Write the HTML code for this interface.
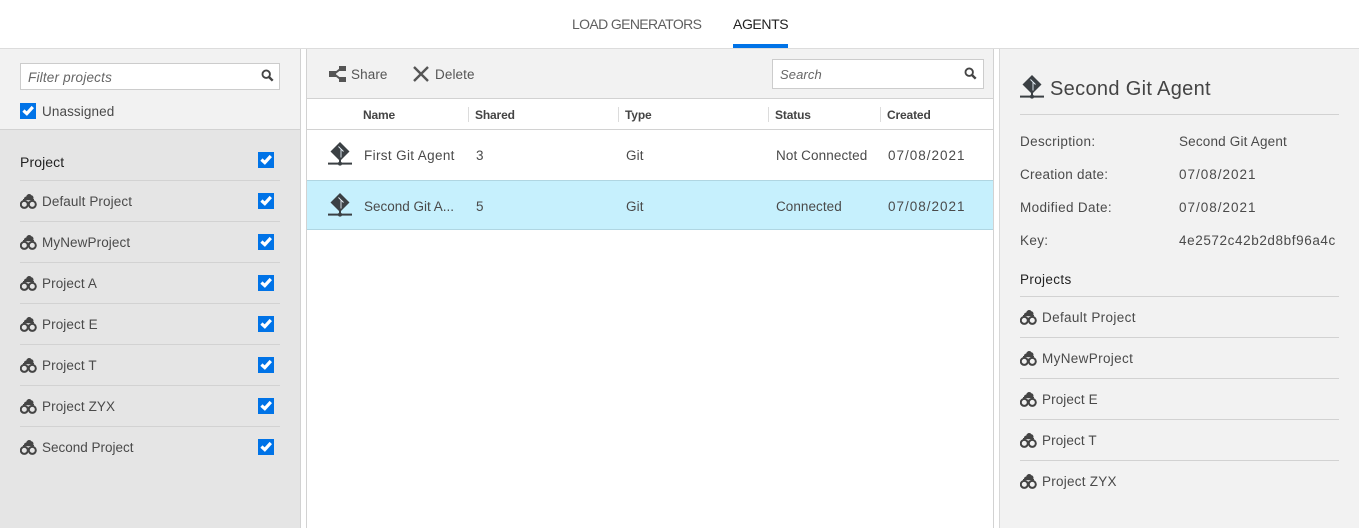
<!DOCTYPE html>
<html><head><meta charset="utf-8">
<style>
html,body{margin:0;padding:0;background:#fff}
body{width:1359px;height:528px;overflow:hidden;position:relative;font-family:"Liberation Sans",sans-serif;font-size:14px;color:#4a4a4a}
.a{position:absolute}
.t{position:absolute;white-space:nowrap;line-height:18px;font-size:13.5px;letter-spacing:.1px}
.r{letter-spacing:.35px}
.n{letter-spacing:1px}
.l{position:absolute;height:1px;background:#d2d2d2}
.b{font-weight:bold;font-size:12px;color:#444;letter-spacing:-.15px}
.d{color:#222}
.s{position:absolute;width:1px;height:15px;top:107px;background:#dcdcdc}
svg{position:absolute;overflow:visible}
</style></head><body>
<svg width="0" height="0" style="position:absolute">
<defs>
<symbol id="p" viewBox="0 0 17 16"><path d="M4 6.4C3.8 4.8 4.8 3.6 6.2 3.6 6.8 1 10 -.1 11.4 2.2 13.2 2.4 14.2 4.6 13 6.4z" fill="#444"/><rect x="3" y="6" width="11" height="1.2" fill="#444"/><circle cx="4.3" cy="11.4" r="3.5" fill="none" stroke="#444" stroke-width="2"/><circle cx="12.3" cy="11.4" r="3.5" fill="none" stroke="#444" stroke-width="2"/><rect x="7" y="8.6" width="3" height="2" fill="#444"/></symbol>
<symbol id="g" viewBox="0 0 24 24"><path d="M12 0 21.5 9.5 12 19 2.5 9.5z" fill="#3b4044"/><path d="M10.5 4.5 13 7v8.5M13 7l2.5 2.5" fill="none" stroke="#e8f2fa" stroke-width=".9"/><rect x="11" y="18" width="2" height="4" fill="#3b4044"/><rect x="0" y="20.6" width="24" height="2" fill="#3b4044"/><circle cx="12" cy="21.6" r="2" fill="#3b4044"/></symbol>
<symbol id="c" viewBox="0 0 16 16"><rect width="16" height="16" fill="#0073e7"/><path d="M3.4 7.6 6.8 10.6 12.8 4" fill="none" stroke="#fff" stroke-width="3.2"/></symbol>
<symbol id="m" viewBox="0 0 14 14"><circle cx="5.6" cy="5.6" r="4" fill="none" stroke="#444" stroke-width="2"/><path d="M8.6 8.6 12.6 12.6" stroke="#444" stroke-width="2.6"/></symbol>
</defs></svg>

<!-- top tabs -->
<div class="t" style="left:572px;top:15px;font-size:14px;color:#5f5f5f;letter-spacing:-.63px">LOAD GENERATORS</div>
<div class="t" style="left:733px;top:15px;font-size:14px;color:#222;letter-spacing:-.4px">AGENTS</div>
<div class="a" style="left:733px;top:44px;width:55px;height:4px;background:#0073e7"></div>
<div class="l" style="left:0;top:48px;width:1359px;background:#dcdcdc"></div>

<!-- left panel -->
<div class="a" style="left:0;top:49px;width:300px;height:80px;background:#f2f2f2"></div>
<div class="a" style="left:0;top:130px;width:300px;height:398px;background:#e5e5e5"></div>
<div class="l" style="left:0;top:129px;width:300px"></div>
<div class="a" style="left:300px;top:49px;width:1px;height:479px;background:#d2d2d2"></div>
<div class="a" style="left:20px;top:63px;width:258px;height:25px;background:#fff;border:1px solid #ccc"></div>
<div class="t" style="left:28px;top:69px;font-style:italic;color:#666;letter-spacing:.2px">Filter projects</div>
<svg style="left:261px;top:69px" width="13" height="13"><use href="#m"/></svg>
<svg style="left:20px;top:103px" width="16" height="16"><use href="#c"/></svg>
<div class="t" style="left:42px;top:103px">Unassigned</div>
<div class="t d" style="left:20px;top:153px;font-size:14px">Project</div>
<svg style="left:258px;top:152px" width="16" height="16"><use href="#c"/></svg>
<div class="l" style="left:20px;top:180px;width:260px"></div>
<div class="l" style="left:20px;top:221px;width:260px"></div>
<div class="l" style="left:20px;top:262px;width:260px"></div>
<div class="l" style="left:20px;top:303px;width:260px"></div>
<div class="l" style="left:20px;top:344px;width:260px"></div>
<div class="l" style="left:20px;top:385px;width:260px"></div>
<div class="l" style="left:20px;top:426px;width:260px"></div>

<svg style="left:20px;top:193px" width="17" height="16"><use href="#p"/></svg><div class="t" style="left:42px;top:193px">Default Project</div><svg style="left:258px;top:193px" width="16" height="16"><use href="#c"/></svg>
<svg style="left:20px;top:234px" width="17" height="16"><use href="#p"/></svg><div class="t" style="left:42px;top:234px">MyNewProject</div><svg style="left:258px;top:234px" width="16" height="16"><use href="#c"/></svg>
<svg style="left:20px;top:275px" width="17" height="16"><use href="#p"/></svg><div class="t" style="left:42px;top:275px">Project A</div><svg style="left:258px;top:275px" width="16" height="16"><use href="#c"/></svg>
<svg style="left:20px;top:316px" width="17" height="16"><use href="#p"/></svg><div class="t" style="left:42px;top:316px">Project E</div><svg style="left:258px;top:316px" width="16" height="16"><use href="#c"/></svg>
<svg style="left:20px;top:357px" width="17" height="16"><use href="#p"/></svg><div class="t" style="left:42px;top:357px">Project T</div><svg style="left:258px;top:357px" width="16" height="16"><use href="#c"/></svg>
<svg style="left:20px;top:398px" width="17" height="16"><use href="#p"/></svg><div class="t" style="left:42px;top:398px">Project ZYX</div><svg style="left:258px;top:398px" width="16" height="16"><use href="#c"/></svg>
<svg style="left:20px;top:439px" width="17" height="16"><use href="#p"/></svg><div class="t" style="left:42px;top:439px;letter-spacing:0">Second Project</div><svg style="left:258px;top:439px" width="16" height="16"><use href="#c"/></svg>

<!-- center panel -->
<div class="a" style="left:306px;top:49px;width:1px;height:479px;background:#d2d2d2"></div>
<div class="a" style="left:993px;top:49px;width:1px;height:479px;background:#d2d2d2"></div>
<div class="a" style="left:307px;top:49px;width:686px;height:49px;background:#f2f2f2"></div>
<div class="l" style="left:307px;top:98px;width:686px"></div>
<svg style="left:329px;top:66px" width="17" height="16" viewBox="0 0 17 16"><rect x="0" y="5" width="7" height="6" fill="#555"/><rect x="10" y="0" width="7" height="5" fill="#555"/><rect x="10" y="11" width="7" height="5" fill="#555"/><path d="M5 8 12 2.5M5 8 12 13.5" stroke="#555" stroke-width="2" fill="none"/></svg>
<div class="t" style="left:351px;top:66px;color:#555">Share</div>
<svg style="left:413px;top:66px" width="16" height="16" viewBox="0 0 16 16"><path d="M1 1 15 15M15 1 1 15" stroke="#555" stroke-width="2.4" fill="none"/></svg>
<div class="t" style="left:435px;top:66px;color:#555">Delete</div>
<div class="a" style="left:772px;top:59px;width:210px;height:28px;background:#fff;border:1px solid #ccc"></div>
<div class="t" style="left:780px;top:66px;font-style:italic;font-size:13px;color:#666">Search</div>
<svg style="left:964px;top:67px" width="13" height="13"><use href="#m"/></svg>

<div class="t b" style="left:363px;top:106px">Name</div>
<div class="t b" style="left:475px;top:106px">Shared</div>
<div class="t b" style="left:625px;top:106px">Type</div>
<div class="t b" style="left:775px;top:106px">Status</div>
<div class="t b" style="left:887px;top:106px">Created</div>
<div class="s" style="left:468px"></div><div class="s" style="left:618px"></div><div class="s" style="left:768px"></div><div class="s" style="left:880px"></div>
<div class="l" style="left:307px;top:129px;width:686px"></div>

<svg style="left:328px;top:142px" width="24" height="24"><use href="#g"/></svg>
<div class="t r" style="left:364px;top:147px">First Git Agent</div>
<div class="t" style="left:476px;top:147px">3</div>
<div class="t" style="left:626px;top:147px">Git</div>
<div class="t" style="left:776px;top:147px">Not Connected</div>
<div class="t n" style="left:888px;top:147px">07/08/2021</div>

<div class="a" style="left:307px;top:180px;width:686px;background:#c6f0fd;border-top:1px solid #b0d6e2;border-bottom:1px solid #b0d6e2;height:48px"></div>
<svg style="left:328px;top:193px" width="24" height="24"><use href="#g"/></svg>
<div class="t" style="left:364px;top:198px;letter-spacing:0">Second Git A...</div>
<div class="t" style="left:476px;top:198px">5</div>
<div class="t" style="left:626px;top:198px">Git</div>
<div class="t" style="left:776px;top:198px;letter-spacing:.05px">Connected</div>
<div class="t n" style="left:888px;top:198px">07/08/2021</div>

<!-- right panel -->
<div class="a" style="left:999px;top:49px;width:360px;height:479px;background:#f2f2f2;border-left:1px solid #d8d8d8;box-sizing:border-box"></div>
<svg style="left:1020px;top:75px" width="24" height="24"><use href="#g"/></svg>
<div class="t" style="left:1050px;top:77px;font-size:20px;line-height:24px;color:#444;letter-spacing:.33px">Second Git Agent</div>
<div class="l" style="left:1020px;top:114px;width:319px"></div>
<div class="t r" style="left:1020px;top:133px">Description:</div><div class="t" style="left:1179px;top:133px;letter-spacing:.18px">Second Git Agent</div>
<div class="t" style="left:1020px;top:166px;letter-spacing:.25px">Creation date:</div><div class="t n" style="left:1179px;top:166px">07/08/2021</div>
<div class="t r" style="left:1020px;top:199px">Modified Date:</div><div class="t n" style="left:1179px;top:199px">07/08/2021</div>
<div class="t r" style="left:1020px;top:232px">Key:</div><div class="t" style="left:1179px;top:232px;letter-spacing:.6px">4e2572c42b2d8bf96a4c</div>
<div class="t d r" style="left:1020px;top:271px">Projects</div>
<div class="l" style="left:1020px;top:296px;width:319px"></div>
<div class="l" style="left:1020px;top:337px;width:319px"></div>
<div class="l" style="left:1020px;top:378px;width:319px"></div>
<div class="l" style="left:1020px;top:419px;width:319px"></div>
<div class="l" style="left:1020px;top:460px;width:319px"></div>
<svg style="left:1020px;top:309px" width="17" height="16"><use href="#p"/></svg><div class="t r" style="left:1042px;top:309px">Default Project</div>
<svg style="left:1020px;top:350px" width="17" height="16"><use href="#p"/></svg><div class="t r" style="left:1042px;top:350px">MyNewProject</div>
<svg style="left:1020px;top:391px" width="17" height="16"><use href="#p"/></svg><div class="t" style="left:1042px;top:391px">Project E</div>
<svg style="left:1020px;top:432px" width="17" height="16"><use href="#p"/></svg><div class="t" style="left:1042px;top:432px">Project T</div>
<svg style="left:1020px;top:473px" width="17" height="16"><use href="#p"/></svg><div class="t" style="left:1042px;top:473px;letter-spacing:.25px">Project ZYX</div>
</body></html>
